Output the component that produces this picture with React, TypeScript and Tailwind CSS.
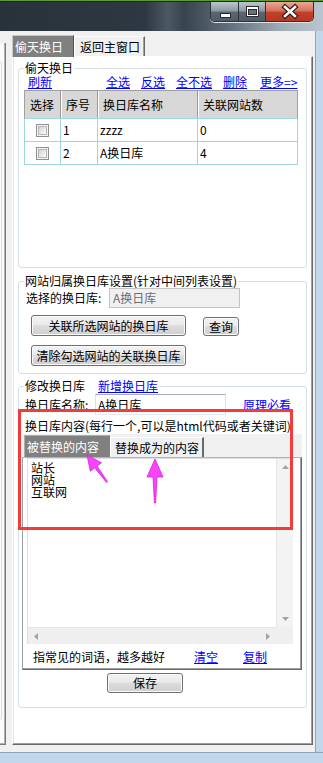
import React from 'react';

function Btn({ children, className = '' }: { children: React.ReactNode; className?: string }) {
  return (
    <div
      className={`flex items-center justify-center rounded-[3px] border border-[#707070] bg-[linear-gradient(#f2f2f2_0%,#ebebeb_45%,#dddddd_50%,#cfcfcf_100%)] shadow-[inset_0_0_0_1px_#fbfbfb] text-black ${className}`}
    >
      {children}
    </div>
  );
}

function A({ children, className = '' }: { children: React.ReactNode; className?: string }) {
  return <span className={`text-[#0000ff] underline underline-offset-[1px] ${className}`}>{children}</span>;
}

function Check() {
  return (
    <span className="block w-[13px] h-[13px] border border-[#8e8f8f] bg-[#f4f4f4] p-[1px]">
      <span className="block w-full h-full border border-[#b4b6b8] bg-[linear-gradient(135deg,#d3d3d3_0%,#ececec_60%,#fbfbfb_100%)]" />
    </span>
  );
}

const cols = 'grid grid-cols-[36px_37px_100px_99px]';

function Table() {
  const rows = [
    { n: '1', name: 'zzzz', c: '0' },
    { n: '2', name: 'A换日库', c: '4' },
  ];
  return (
    <div className="w-[274px]">
      <div className={`${cols} h-[29px] bg-[#d7d7d7] border border-[#a0a0a0] border-b-[#9fd6e3]`}>
        {['选择', '序号', '换日库名称', '关联网站数'].map((h, i) => (
          <div
            key={h}
            className={`flex items-center pl-[5px] ${i < 3 ? 'border-r border-[#9a9a9a]' : ''} ${i > 0 ? 'shadow-[inset_1px_0_0_#ffffff]' : ''}`}
          >
            {h}
          </div>
        ))}
      </div>
      {rows.map((r) => (
        <div key={r.n} className={`${cols} h-[23px] border-x border-b border-[#9fd6e3]`}>
          <div className="flex items-center justify-center border-r border-[#9fd6e3]">
            <Check />
          </div>
          <div className="flex items-center pl-[2px] border-r border-[#9fd6e3]">{r.n}</div>
          <div className="flex items-center pl-[2px] border-r border-[#9fd6e3]">{r.name}</div>
          <div className="flex items-center pl-[2px]">{r.c}</div>
        </div>
      ))}
    </div>
  );
}

function WinButtons() {
  return (
    <div className="flex h-[20px] rounded-b-[5px] border border-t-0 border-[#2a333c] overflow-hidden shadow-[0_1px_0_#d8e2ea]">
      <div className="relative w-[28px] border-r border-[#2a333c] bg-[linear-gradient(#bcc6ce_0%,#8e9ba6_45%,#5a6772_55%,#4f5c67_100%)]">
        <svg className="absolute inset-0" width="27" height="20">
          <rect x="9.5" y="11.5" width="10" height="4" fill="#ffffff" stroke="#2b2b2b" />
        </svg>
      </div>
      <div className="relative w-[27px] border-r border-[#2a333c] bg-[linear-gradient(#bcc6ce_0%,#8e9ba6_45%,#5a6772_55%,#4f5c67_100%)]">
        <svg className="absolute inset-0" width="26" height="20">
          <rect x="7.5" y="4.5" width="12" height="10" fill="#ffffff" stroke="#2b2b2b" />
          <rect x="9.5" y="7.5" width="8" height="5" fill="#66717b" stroke="#2b2b2b" />
        </svg>
      </div>
      <div className="relative w-[47px] bg-[linear-gradient(#e9a898_0%,#d6735f_45%,#c2412b_55%,#b53822_100%)]">
        <svg className="absolute inset-0" width="47" height="20">
          <path d="M19 5 L29 14 M29 5 L19 14" stroke="#3a1812" strokeWidth="5" strokeLinecap="square" />
          <path d="M19 5 L29 14 M29 5 L19 14" stroke="#ffffff" strokeWidth="2.6" strokeLinecap="square" />
        </svg>
      </div>
    </div>
  );
}

function TitleBar() {
  return (
    <div className="h-[31px] flex flex-col bg-[#2f3a44]">
      <div className="h-[1px] bg-[#5e9b2c]" />
      <div className="h-[1px] bg-[#1c252d]" />
      <div className="flex-1 flex justify-end pr-[9px] bg-[linear-gradient(90deg,#27323b_0%,#2d3842_45%,#4c5862_52%,#37434d_57%,#5f6c77_70%,#a3b0ba_88%,#bac6cf_100%)]">
        <WinButtons />
      </div>
    </div>
  );
}

function LeftStrip() {
  return (
    <div className="w-[12px] shrink-0 flex flex-col pt-[12px] pb-[7px]">
      <div className="w-[6px] flex-1 bg-[#fbfbfb] border-r border-b border-[#7a7a7a] shadow-[inset_-1px_-1px_0_#b0b0b0]">
        <div className="mt-[18px] w-[2px] h-[659px] border-t border-r border-b border-[#d5dfe5] rounded-r-[3px]" />
      </div>
    </div>
  );
}

const fieldset = 'border border-[#d5dfe5] rounded-[3px] pl-[5px] min-w-0';

function MainArea() {
  return (
    <div className="w-[301px] shrink-0 flex flex-col pt-[4px] pb-[7px]">
      <div className="flex items-end h-[21px]">
        <div className="relative z-10 -mb-px h-[22px] w-[62px] flex items-center bg-[#808080] border-t border-l border-[#c8c8c8] border-r border-r-[#505050] pl-[2px] text-white">
          偷天换日
        </div>
        <div className="h-[20px] w-[71px] flex items-center bg-[#f0f0f0] border-t border-l border-white border-r border-r-[#696969] shadow-[inset_-1px_0_0_#a0a0a0] pl-[5px]">
          返回主窗口
        </div>
      </div>
      <div className="h-[689px] bg-white border-t border-l border-white border-r border-b border-r-[#696969] border-b-[#696969] shadow-[inset_-1px_-1px_0_#a0a0a0,inset_1px_0_0_#e3e3e3] px-[5px]">
        {/* 偷天换日 */}
        <fieldset className={`mt-[4px] ${fieldset}`}>
          <legend className="px-[1px] h-[14px]">偷天换日</legend>
          <div className="h-[192px]">
            <div className="flex h-[15px] pl-[4px]">
              <A>刷新</A>
              <A className="ml-[54px]">全选</A>
              <A className="ml-[11px]">反选</A>
              <A className="ml-[11px]">全不选</A>
              <A className="ml-[11px]">删除</A>
              <A className="ml-[13px]">更多=&gt;</A>
            </div>
            <Table />
          </div>
        </fieldset>

        {/* 网站归属换日库设置 */}
        <fieldset className={`mt-[6px] ${fieldset}`}>
          <legend className="px-[1px] h-[14px]">网站归属换日库设置(针对中间列表设置)</legend>
          <div className="h-[85px]">
            <div className="flex items-center h-[20px]">
              <span className="w-[85px] pl-[2px]">选择的换日库:</span>
              <div className="w-[131px] h-[20px] flex items-center border border-[#c4c4c4] bg-[#f0f0f0] pl-[3px] text-[#6d6d6d]">
                A换日库
              </div>
            </div>
            <div className="flex items-start mt-[7px] ml-[7px]">
              <Btn className="w-[155px] h-[21px]">关联所选网站的换日库</Btn>
              <Btn className="ml-[17px] mt-[2px] w-[36px] h-[19px]">查询</Btn>
            </div>
            <Btn className="ml-[7px] mt-[9px] w-[155px] h-[21px]">清除勾选网站的关联换日库</Btn>
          </div>
        </fieldset>

        {/* 修改换日库 */}
        <fieldset className={`mt-[5px] ${fieldset}`}>
          <legend className="px-[1px] h-[14px]">
            <span>修改换日库</span>
            <A className="ml-[13px]">新增换日库</A>
          </legend>
          <div className="h-[313px]">
            <div className="flex items-center mt-[1px] h-[21px]">
              <span className="w-[71px] pl-[1px]">换日库名称:</span>
              <div className="w-[131px] h-[21px] flex items-center border border-[#abadb3] border-l-[#dbdfe6] border-r-[#dbdfe6] border-b-[#e3e9ef] bg-white pl-[2px]">
                A换日库
              </div>
              <A className="ml-[17px]">原理必看</A>
            </div>
            <div className="mt-[4px] h-[14px] pl-[1px] whitespace-nowrap">
              换日库内容(每行一个,可以是html代码或者关键词)
            </div>
            <div className="mt-[1px] -ml-[2px] w-[280px]">
              <div className="h-[23px] flex items-end bg-[#f0f0f0] pl-[2px]">
                <div className="h-[22px] w-[86px] flex items-center bg-[#808080] border-t border-l border-[#b0b0b0] pl-[2px] text-white">
                  被替换的内容
                </div>
                <div className="h-[20px] w-[94px] flex items-center bg-[#f0f0f0] border-t border-l border-white border-r-2 border-r-[#696969] pl-[4px]">
                  替换成为的内容
                </div>
              </div>
              <div className="h-[213px] flex flex-col bg-white border-t border-[#b4b4b4] border-l border-l-[#a0a0a0] border-r border-r-[#696969] border-b border-b-[#696969] shadow-[inset_-1px_-1px_0_#a0a0a0]">
                <div className="ml-[4px] w-[266px] h-[186px] border-t border-l border-[#dcdde3] grid grid-cols-[1fr_17px] grid-rows-[1fr_17px]">
                  <div className="pl-[3px] pt-[3px] leading-[12px]">
                    <div>站长</div>
                    <div>网站</div>
                    <div>互联网</div>
                  </div>
                  <div className="flex flex-col justify-between items-center bg-[#f3f3f3] border-l border-[#e6e6e6] py-[6px]">
                    <svg width="7" height="4">
                      <path d="M0 4 L3.5 0 L7 4 Z" fill="#a3a3a3" />
                    </svg>
                    <svg width="7" height="4">
                      <path d="M0 0 L3.5 4 L7 0 Z" fill="#a3a3a3" />
                    </svg>
                  </div>
                  <div className="flex justify-between items-center bg-[#efefef] border-t border-[#e6e6e6] px-[6px]">
                    <svg width="4" height="7">
                      <path d="M4 0 L0 3.5 L4 7 Z" fill="#a3a3a3" />
                    </svg>
                    <svg width="4" height="7">
                      <path d="M0 0 L4 3.5 L0 7 Z" fill="#a3a3a3" />
                    </svg>
                  </div>
                  <div className="bg-[#efefef]" />
                </div>
                <div className="flex-1 flex items-center pl-[10px]">
                  <span>指常见的词语，越多越好</span>
                  <A className="ml-[29px]">清空</A>
                  <A className="ml-[25px]">复制</A>
                </div>
              </div>
            </div>
            <Btn className="mt-[3px] ml-[83px] w-[76px] h-[20px]">保存</Btn>
          </div>
        </fieldset>
      </div>
    </div>
  );
}

export default function App() {
  return (
    <div className="relative w-[323px] h-[763px] overflow-hidden bg-[#f0f0f0] text-black text-[12px] leading-[14px] font-[family-name:'Noto_Sans_CJK_SC','Noto_Sans',sans-serif]">
      <TitleBar />
      <div className="flex h-[721px]">
        <LeftStrip />
        <MainArea />
        <div className="w-[2px] shrink-0" />
        <div className="w-[8px] shrink-0 border-l border-[#8ea4bc] bg-[#c2d6ec]" />
      </div>
      <div className="h-[11px] border-t border-[#8ea4bc] bg-[#c2d6ec]" />

      {/* annotation overlay */}
      <div className="absolute left-[18px] top-[409px] w-[275px] h-[121px] border-[3px] border-[#f23b3b]" />
      <svg className="absolute inset-0 pointer-events-none" width="323" height="763">
        <path
          d="M87 455 L101.5 462.8 L97.1 466.1 L107.5 481.6 L106.5 482.4 L94.7 467.9 L90.3 471.2 Z"
          fill="#f844f8"
          stroke="#e020e0"
          strokeWidth="0.8"
        />
        <path
          d="M155 459 L163 477 L157 477 L155.6 503 L154.4 503 L153 477 L147 477 Z"
          fill="#f844f8"
          stroke="#e020e0"
          strokeWidth="0.8"
        />
      </svg>
    </div>
  );
}
